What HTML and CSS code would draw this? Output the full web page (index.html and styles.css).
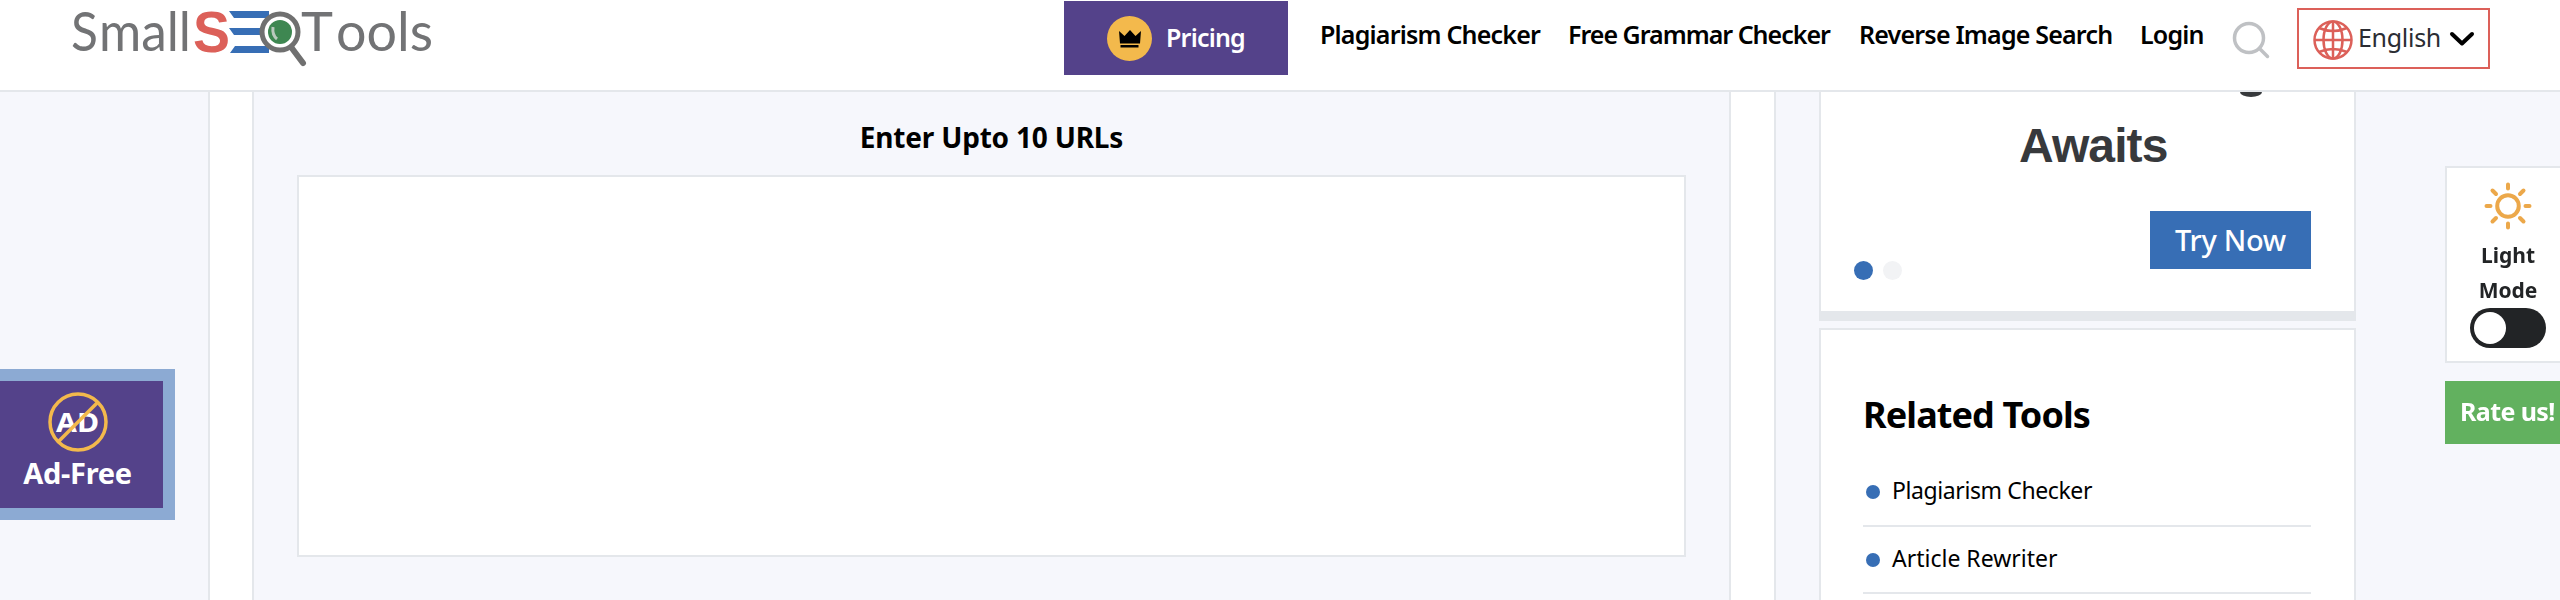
FILE: index.html
```
<!DOCTYPE html>
<html lang="en">

<head>
    <meta charset="utf-8">
    <title>SmallSEOTools</title>
    <link rel="stylesheet" href="styles.css">
</head>
<body>
    <header class="header">
        <a class="logo">
            <svg width="362" height="70" viewBox="0 0 362 70">
                <g class="logo-text">
                    <text x="-1" y="51" textLength="27" lengthAdjust="spacingAndGlyphs">S</text>
                    <text x="27" y="51" textLength="92" lengthAdjust="spacingAndGlyphs">mall</text>
                    <text x="229" y="51" textLength="32" lengthAdjust="spacingAndGlyphs">T</text>
                    <text x="264" y="51" textLength="97" lengthAdjust="spacingAndGlyphs">ools</text>
                </g>
                <text class="logo-s" x="121" y="52" textLength="37" lengthAdjust="spacingAndGlyphs">S</text>
                <path class="logo-bars" d="M157 11h40v7h-35zM157 28h38v7h-33zM163 46h34v7h-39z" />
                <path class="logo-handle" d="M219 47l12 16" />
                <circle class="logo-lens" cx="208" cy="32" r="18" />
                <circle class="logo-glass" cx="208" cy="32" r="12" />
                <path class="logo-shine" d="M201 27q-1 8 4 12" />
            </svg>
        </a>
        <a class="pricing">
            <svg width="45" height="45" viewBox="0 0 45 45">
                <circle cx="22.5" cy="22.5" r="22.5" fill="#f3b94c" />
                <path d="M12 15l5.500 5 5.500-6 5.500 6 5.500-5-1 12.500h-20zM13.500 29h18v2.500h-18z" />
            </svg>
            <span>Pricing</span>
        </a>
        <nav class="nav">
            <a class="nav-plagiarism">Plagiarism Checker</a>
            <a class="nav-grammar">Free Grammar Checker</a>
            <a class="nav-image">Reverse Image Search</a>
            <a class="nav-login">Login</a>
        </nav>
        <svg class="search" width="38" height="38" viewBox="0 0 38 38">
            <circle cx="17" cy="17" r="14.500" />
            <path d="M27.500 27.500l8 8" />
        </svg>
        <div class="language">
            <svg class="globe" width="40" height="40" viewBox="0 0 40 40">
                <circle cx="20" cy="20" r="18.500" />
                <ellipse cx="20" cy="20" rx="9.500" ry="18.500" />
                <path d="M20 1v38M1 20h38M6 8q14 6 28 0M6 32q14-6 28 0" />
            </svg>
            <span>English</span>
            <svg class="chevron" width="26" height="18" viewBox="0 0 26 18">
                <path d="M3 4l10 9.500 10-9.500" />
            </svg>
        </div>
    </header>
    <div class="page">
        <main class="content">
            <div class="tool">
                <h2>Enter Upto 10 URLs</h2>
                <div class="urls"></div>
            </div>
        </main>
        <aside class="sidebar">
            <div class="promo">
                <div class="promo-clip"></div>
                <div class="promo-title">Awaits</div>
                <div class="promo-footer">
                    <div class="dots"><i class="active"></i><i></i></div>
                    <a class="try">Try Now</a>
                </div>
            </div>
            <div class="related">
                <h3>Related Tools</h3>
                <ul>
                    <li><span>Plagiarism Checker</span></li>
                    <li><span class="item-rewriter">Article Rewriter</span></li>
                </ul>
            </div>
        </aside>
    </div>
    <a class="ad-free">
        <svg width="60" height="60" viewBox="0 0 60 60">
            <text x="8" y="39.500" textLength="43" lengthAdjust="spacingAndGlyphs">AD</text>
            <circle cx="30" cy="30" r="28" />
            <path d="M10.500 49.500l39-39" />
        </svg>
        <span>Ad-Free</span>
    </a>
    <div class="widgets">
        <div class="mode">
            <svg width="48" height="48" viewBox="0 0 48 48">
                <circle cx="24" cy="24" r="10.800" />
                <path d="M24 2.500v4M24 41.500v4M2.500 24h4M41.500 24h4M8.500 8.500l3.500 3.500M36 36l3.500 3.500M8.500 39.500l3.500-3.500M36 12l3.500-3.500" />
            </svg>
            <span>Light</span>
            <span>Mode</span>
            <div class="toggle"></div>
        </div>
        <a class="rate">Rate us!</a>
    </div>
</body>

</html>
```
FILE: styles.css
```
* {
    box-sizing: border-box;
}

body {
    margin: 0;
    height: 600px;
    overflow: hidden;
    background-color: #f6f7fc;
    font-family: "Noto Sans", sans-serif;
    color: #000;
}

svg {
    display: block;
    flex: none;
}

.header {
    display: flex;
    align-items: flex-start;
    height: 92px;
    background-color: white;
    border-bottom: 2px solid #e4e7eb;
}

.logo {
    width: 362px;
    margin-left: 72px;
}

.logo svg {
    overflow: visible;
}

.logo-text {
    font-family: Lato, sans-serif;
    font-size: 55px;
    fill: #727375;
}

.logo-s {
    font-family: "Liberation Sans", sans-serif;
    font-weight: bold;
    font-size: 58px;
    fill: #dc6059;
}

.logo-bars {
    fill: #376eb5;
}

.logo-handle {
    stroke: #707070;
    stroke-width: 6;
    stroke-linecap: round;
}

.logo-lens {
    fill: white;
    stroke: #707070;
    stroke-width: 5;
}

.logo-glass {
    fill: #3e8751;
}

.logo-shine {
    fill: none;
    stroke: #b9c9bd;
    stroke-width: 3;
}

.pricing {
    display: flex;
    align-items: center;
    width: 224px;
    height: 74px;
    margin: 1px 0 0 630px;
    padding-left: 43px;
    background-color: #54428a;
    color: white;
    font-size: 25px;
    font-weight: 600;
}

.pricing span {
    margin: -3px 0 0 14px;
    letter-spacing: -0.8px;
}

.nav {
    display: flex;
    margin: 17px 0 0 32px;
    font-size: 25px;
    line-height: 34px;
    font-weight: 600;
    white-space: nowrap;
    letter-spacing: -0.8px;
}

.nav-plagiarism {
    width: 248px;
}

.nav-grammar {
    width: 291px;
    letter-spacing: -1px;
}

.nav-image {
    width: 281px;
}

.nav-login {
    width: 92px;
}

.search {
    margin-top: 21px;
    fill: none;
    stroke: #bfc1c4;
    stroke-width: 3.5;
    stroke-linecap: round;
}

.language {
    display: flex;
    align-items: center;
    width: 193px;
    height: 61px;
    margin: 8px 0 0 27px;
    padding-left: 14px;
    border: 2px solid #dc6059;
    color: #2b2d33;
    font-size: 25px;
}

.language span {
    width: 91px;
    margin: -4px 0 0 5px;
    letter-spacing: -0.3px;
}

.globe {
    margin-top: 3px;
    fill: none;
    stroke: #dc6059;
    stroke-width: 2.5;
}

.chevron {
    fill: none;
    stroke: #000;
    stroke-width: 4;
    stroke-linecap: round;
    stroke-linejoin: round;
}

.page {
    display: flex;
    height: 508px;
}

.content {
    width: 1568px;
    margin-left: 208px;
    padding: 0 43px 0 42px;
    background-color: white;
    border: solid #e4e7eb;
    border-width: 0 2px;
}

.tool {
    height: 508px;
    padding: 26px 43px 0;
    background-color: #f6f7fc;
    border: solid #e4e7eb;
    border-width: 0 2px;
}

.tool h2 {
    margin: 0;
    font-size: 28px;
    line-height: 38px;
    font-weight: 700;
    text-align: center;
    letter-spacing: -0.2px;
}

.urls {
    height: 382px;
    margin-top: 19px;
    background-color: white;
    border: 2px solid #e4e7eb;
}

.sidebar {
    width: 537px;
    margin-left: 43px;
}

.promo {
    height: 229px;
    padding: 0 43px 0 33px;
    background-color: white;
    border: solid #e4e7eb;
    border-width: 0 2px 10px;
}

.promo-clip {
    width: 22px;
    height: 5px;
    margin-left: 386px;
    background-color: #37393c;
    border-radius: 0 0 11px 11px / 0 0 5px 5px;
}

.promo-title {
    margin: 21px 0 0 165px;
    font-family: "Liberation Sans", sans-serif;
    font-size: 48px;
    line-height: 56px;
    font-weight: bold;
    color: #37393c;
    letter-spacing: -0.9px;
}

.promo-footer {
    display: flex;
    justify-content: space-between;
    margin-top: 37px;
}

.dots {
    display: flex;
    gap: 10px;
    margin-top: 50px;
}

.dots i {
    width: 19px;
    height: 19px;
    border-radius: 50%;
    background-color: #f2f3f5;
}

.dots .active {
    background-color: #376eb5;
}

.try {
    width: 161px;
    height: 58px;
    background-color: #376eb5;
    color: white;
    font-size: 29px;
    line-height: 57px;
    font-weight: 500;
    text-align: center;
    letter-spacing: -0.3px;
}

.related {
    height: 300px;
    margin-top: 7px;
    padding: 61px 43px 0 42px;
    background-color: white;
    border: 2px solid #e4e7eb;
}

.related h3 {
    margin: 0;
    font-size: 36px;
    line-height: 48px;
    font-weight: 700;
    letter-spacing: -0.9px;
}

.related ul {
    margin: 20px 0 0;
    padding: 0;
    list-style: none;
}

.related li {
    display: flex;
    align-items: center;
    height: 67.5px;
    padding-bottom: 3px;
    border-bottom: 2px solid #e4e7eb;
    font-size: 23px;
    letter-spacing: -0.4px;
}

.related li::before {
    content: "";
    width: 14px;
    height: 14px;
    margin: 4px 12px 0 3px;
    border-radius: 50%;
    background-color: #376eb5;
}

.related .item-rewriter {
    letter-spacing: 0;
}

.ad-free {
    position: fixed;
    left: 0;
    top: 369px;
    width: 175px;
    height: 151px;
    padding: 22px 8px 0 0;
    display: flex;
    flex-direction: column;
    align-items: center;
    background-color: #54428a;
    border: solid #8caad3;
    border-width: 12px 12px 12px 0;
    color: white;
    font-size: 29px;
    font-weight: 700;
}

.ad-free svg {
    margin-top: -11px;
    fill: none;
    stroke: #f3b94c;
    stroke-width: 3.5;
}

.ad-free text {
    fill: white;
    stroke: none;
    font-size: 27px;
}

.ad-free span {
    line-height: 40px;
    margin-top: 1px;
    letter-spacing: -0.3px;
}

.widgets {
    position: fixed;
    right: 0;
    top: 166px;
    width: 115px;
}

.mode {
    display: flex;
    flex-direction: column;
    align-items: center;
    height: 197px;
    padding: 14px 0 0 9px;
    background-color: white;
    border: solid #e4e7eb;
    border-width: 2px 0 2px 2px;
    color: #222426;
    font-size: 21px;
    line-height: 35px;
    font-weight: 700;
}

.mode svg {
    margin-bottom: 8px;
    fill: none;
    stroke: #eca84a;
    stroke-width: 4;
    stroke-linecap: round;
}

.toggle {
    width: 76px;
    height: 40px;
    padding: 4px;
    border-radius: 20px;
    background-color: #222426;
}

.toggle::before {
    content: "";
    display: block;
    width: 32px;
    height: 32px;
    border-radius: 50%;
    background-color: white;
}

.rate {
    display: block;
    height: 63px;
    margin-top: 18px;
    padding-left: 15px;
    background-color: #62b15f;
    color: white;
    font-size: 25px;
    line-height: 61px;
    font-weight: 700;
    letter-spacing: -0.6px;
}
```
